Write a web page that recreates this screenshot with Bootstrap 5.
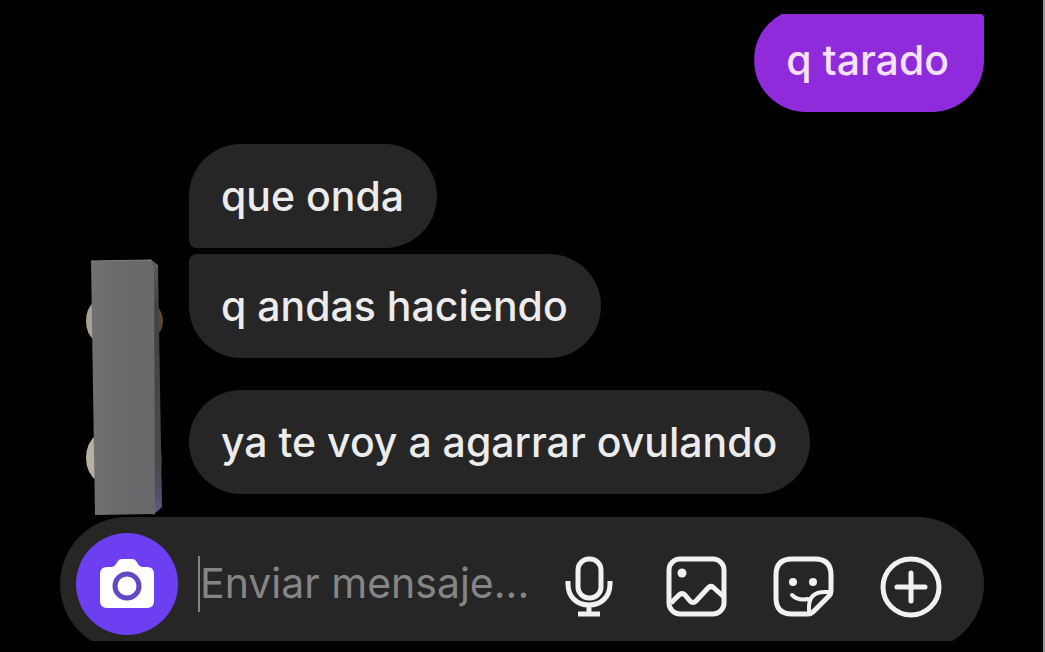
<!DOCTYPE html>
<html lang="es">
<head>
<meta charset="utf-8">
<meta name="viewport" content="width=device-width, initial-scale=1">
<title>Chat</title>
<link href="https://cdn.jsdelivr.net/npm/bootstrap@5.3.0/dist/css/bootstrap.min.css" rel="stylesheet">
<style>
  body { background: #000; font-family: Inter, "Liberation Sans", sans-serif; }
  .chat-page { border-right: 2px solid #97979a; padding: 8px 59px 11px 60px; }
  .bubble { background: #262626; color: #ececec; font-size: 41px; font-weight: 450; line-height: 52px; padding: 26px 33px 26px 32px; border-radius: 52px; }
  .bubble-first { border-bottom-left-radius: 8px; }
  .bubble-next { border-top-left-radius: 8px; margin-top: 6px; }
  .bubble-apart { margin-top: 32px; }
  .bubble-sent { background: #8f2bdb; color: #f6e2ff; padding-right: 35px; border-top-right-radius: 8px; clip-path: inset(6px 0 0 0 round 0 4px 0 0); }
  .thread { margin-top: 32px; padding-left: 24px; gap: 25px; }
  .thread-list { padding-bottom: 23px; }
  .composer-clip { overflow: hidden; height: 124px; }
  .composer { background: #262626; height: 134px; border-radius: 67px; padding: 0 42px 0 16px; }
  .camera-btn { width: 102px; height: 102px; background: #6c40f2; }
  .message-box { min-width: 0; height: 56px; margin: 0 20px; padding: 0; border: 0; border-left: 2px solid #858585; background: transparent; color: #ececec; font-size: 41px; outline: 0; }
  .message-box::placeholder { color: #858585; opacity: 1; }
  .tools { gap: 45px; padding-top: 6px; }
</style>
</head>
<body>
<main class="chat-page min-vh-100 d-flex flex-column">
  <div class="d-flex justify-content-end">
    <div class="bubble bubble-sent">q tarado</div>
  </div>

  <div class="thread d-flex align-items-end">
    <svg class="flex-shrink-0" width="80" height="258" viewBox="84 259 80 258" aria-hidden="true">
      <defs>
        <linearGradient id="front" x2="1"><stop stop-color="#707073"/><stop offset=".5" stop-color="#6a6a6d"/><stop offset="1" stop-color="#69696c"/></linearGradient>
        <linearGradient id="side" x2="0" y2="1"><stop stop-color="#5d5d60"/><stop offset=".2" stop-color="#424244"/><stop offset=".8" stop-color="#4a4a4c"/><stop offset=".93" stop-color="#50506e"/><stop offset="1" stop-color="#5d6296"/></linearGradient>
      </defs>
      <path d="M95 301Q86 308 86 321T95 341Z" fill="#aaa294"/>
      <path d="M97 434Q86 443 86 458T97 481Z" fill="#b8b0a1"/>
      <path d="M156 305Q163 312 163 321T157 335Z" fill="#5e4433"/>
      <path d="M158 447Q162 452 162 461T158 471Z" fill="#3a2c22"/>
      <path d="M149 259L158 266L162 507L153 515Z" fill="url(#side)"/>
      <path d="M91 261L151 260L154 267L155 514L95 515Z" fill="url(#front)"/>
      <path d="M91 261L151 260L158 266" fill="none" stroke="#848487" stroke-width="1"/>
    </svg>
    <div class="thread-list d-flex flex-column align-items-start">
      <div class="bubble bubble-first">que onda</div>
      <div class="bubble bubble-next">q andas haciendo</div>
      <div class="bubble bubble-apart">ya te voy a agarrar ovulando</div>
    </div>
  </div>

  <div class="composer-clip">
    <form class="composer d-flex align-items-center">
      <button type="button" class="camera-btn btn border-0 rounded-circle p-0 flex-shrink-0 d-flex align-items-center justify-content-center" aria-label="Cámara">
        <svg width="56" height="50" viewBox="0 0 56 50"><path d="M8 8H13Q15 8 17 5L19 2Q20 0 23 0H33Q36 0 37 2L39 5Q41 8 43 8H48Q55 8 55 15V42Q55 49 48 49H8Q1 49 1 42V15Q1 8 8 8Z" fill="#fff"/><circle cx="28" cy="27" r="12" fill="#fff" stroke="#6547c4" stroke-width="5"/></svg>
      </button>
      <input class="message-box flex-grow-1" type="text" placeholder="Enviar mensaje..." aria-label="Enviar mensaje">
      <div class="tools d-flex flex-shrink-0">
        <button type="button" class="btn border-0 p-0 d-flex" aria-label="Grabar audio">
          <svg width="62" height="62" viewBox="0 0 62 62" fill="none" stroke="#f1f1f1" stroke-width="5"><rect x="19" y="3" width="23" height="39" rx="11"/><path d="M9 25V28C9 41 18 49 30 49S51 41 51 28V25M30 49V58M19 58H41"/></svg>
        </button>
        <button type="button" class="btn border-0 p-0 d-flex" aria-label="Enviar foto">
          <svg width="62" height="62" viewBox="0 0 62 62" fill="none" stroke="#f1f1f1" stroke-width="5"><rect x="3" y="3" width="55" height="55" rx="11"/><path d="M5 47L13 39Q16 36 19 39L24 45Q27 48 30 45L42 32Q45 29 48 32L58 41" stroke-linejoin="round"/><circle cx="16" cy="17" r="4.500" fill="#f1f1f1" stroke="none"/></svg>
        </button>
        <button type="button" class="btn border-0 p-0 d-flex" aria-label="Stickers">
          <svg width="62" height="62" viewBox="0 0 62 62" fill="none" stroke="#f1f1f1" stroke-width="5" stroke-linecap="round" stroke-linejoin="round"><path d="M19 3H42Q58 3 58 19V35Q58 38 56 40L40 56Q38 58 35 58H19Q3 58 3 42V19Q3 3 19 3Z"/><path d="M36 57V51Q36 36 52 36H57M19 39Q25 45 35 43" stroke-width="4"/><g fill="#f1f1f1" stroke="none"><circle cx="20" cy="26" r="4"/><circle cx="40" cy="26" r="4"/></g></svg>
        </button>
        <button type="button" class="btn border-0 p-0 d-flex" aria-label="Más opciones">
          <svg width="62" height="62" viewBox="0 0 62 62" fill="none" stroke="#f1f1f1" stroke-width="5" stroke-linecap="round"><circle cx="31" cy="31" r="28"/><path d="M31 17V45M17 31H45"/></svg>
        </button>
      </div>
    </form>
  </div>
</main>
<script src="https://cdn.jsdelivr.net/npm/bootstrap@5.3.0/dist/js/bootstrap.bundle.min.js"></script>
</body>
</html>
